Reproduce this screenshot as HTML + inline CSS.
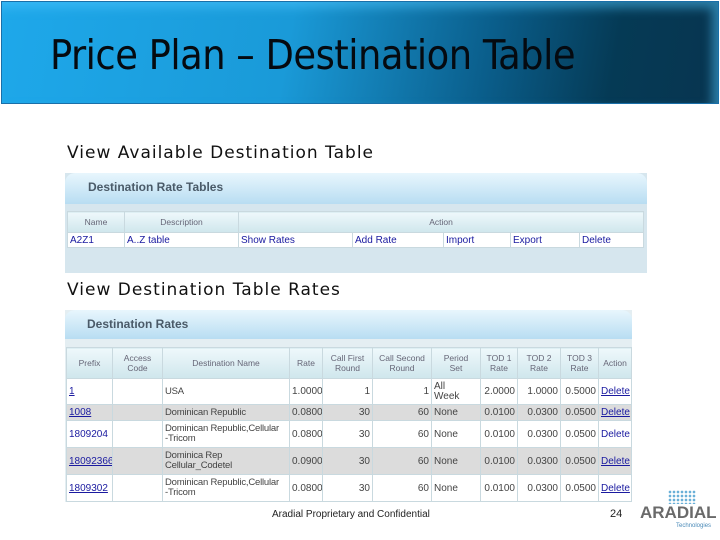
<!DOCTYPE html><html><head><style>
*{margin:0;padding:0;box-sizing:border-box}
body{width:720px;height:540px;background:#fff;position:relative;overflow:hidden;font-family:"Liberation Sans",sans-serif}
.a{position:absolute}
.hdr{left:1px;top:1px;width:718px;height:103px;border:1px solid #1a6fa8;background:linear-gradient(100deg,#1ea8ea 0%,#1a9ad8 40%,#0a5d8a 68%,#053a55 85%,#083550 100%);box-shadow:inset -6px 6px 10px rgba(80,200,255,.5)}
.hdr span{position:absolute;left:48px;top:29px;font-size:41px;color:#050a10;font-family:"DejaVu Sans Condensed","Liberation Sans Narrow",sans-serif;letter-spacing:-0.5px}
.cap{font-family:"DejaVu Sans",sans-serif;font-size:17px;color:#111;letter-spacing:1px}
.panel{background:#d6e6ee}
.bar{background:linear-gradient(#e8f6fd,#b8ddf2);border-radius:10px 10px 0 0;color:#4a5a68;font-weight:bold;font-size:12px}
table{border-collapse:collapse;position:absolute;font-size:10px;font-family:"Liberation Sans",sans-serif;table-layout:fixed}
td{border:1px solid #c9d9df;padding:0 2px;color:#444;white-space:nowrap;overflow:hidden}
th{border:1px solid #c9d9df;background:linear-gradient(#eef8fb,#cfe6ec);color:#667;font-weight:normal;font-size:8.5px;text-align:center;line-height:10px}
.l{color:#1a1aa0}
.u{color:#1a1aa0;text-decoration:underline}
.g td{background:#dcdcdc}
.w td{background:#fff}
.r{text-align:right}
.d{font-size:9.5px;letter-spacing:-0.2px}
</style></head><body>
<div class="a hdr"><span>Price Plan – Destination Table</span></div>
<div class="a cap" style="left:67px;top:143px">View Available Destination Table</div>
<div class="a panel" style="left:65px;top:173px;width:582px;height:100px"></div>
<div class="a bar" style="left:65px;top:173px;width:582px;height:31px;padding:7px 0 0 23px">Destination Rate Tables</div>
<table style="left:67px;top:211px;width:577px">
<colgroup><col style="width:57px"><col style="width:114px"><col style="width:114px"><col style="width:91px"><col style="width:67px"><col style="width:69px"><col></colgroup>
<tr style="height:21px"><th>Name</th><th>Description</th><th colspan="5">Action</th></tr>
<tr class="w" style="height:15px"><td class="l">A2Z1</td><td class="l">A..Z table</td><td class="l">Show Rates</td><td class="l">Add Rate</td><td class="l">Import</td><td class="l">Export</td><td class="l">Delete</td></tr>
</table>
<div class="a cap" style="left:67px;top:280px">View Destination Table Rates</div>
<div class="a panel" style="left:65px;top:310px;width:567px;height:192px;background:#e4eef2"></div>
<div class="a bar" style="left:65px;top:310px;width:567px;height:29px;padding:7px 0 0 22px">Destination Rates</div>
<table style="left:66px;top:347px;width:566px">
<colgroup><col style="width:46px"><col style="width:50px"><col style="width:127px"><col style="width:33px"><col style="width:50px"><col style="width:59px"><col style="width:49px"><col style="width:37px"><col style="width:43px"><col style="width:38px"><col></colgroup>
<tr style="height:31px"><th>Prefix</th><th>Access<br>Code</th><th>Destination Name</th><th>Rate</th><th>Call First<br>Round</th><th>Call Second<br>Round</th><th>Period<br>Set</th><th>TOD 1<br>Rate</th><th>TOD 2<br>Rate</th><th>TOD 3<br>Rate</th><th>Action</th></tr>
<tr class="w" style="height:26px"><td class="u">1</td><td></td><td class="d">USA</td><td>1.0000</td><td class="r">1</td><td class="r">1</td><td style="line-height:10px">All<br>Week</td><td class="r">2.0000</td><td class="r">1.0000</td><td class="r">0.5000</td><td class="u">Delete</td></tr>
<tr class="g" style="height:16px"><td class="u">1008</td><td></td><td class="d">Dominican Republic</td><td>0.0800</td><td class="r">30</td><td class="r">60</td><td>None</td><td class="r">0.0100</td><td class="r">0.0300</td><td class="r">0.0500</td><td class="u">Delete</td></tr>
<tr class="w" style="height:27px"><td class="l">1809204</td><td></td><td class="d" style="line-height:10px">Dominican Republic,Cellular<br>-Tricom</td><td>0.0800</td><td class="r">30</td><td class="r">60</td><td>None</td><td class="r">0.0100</td><td class="r">0.0300</td><td class="r">0.0500</td><td class="l">Delete</td></tr>
<tr class="g" style="height:27px"><td class="u">18092366</td><td></td><td class="d" style="line-height:10px">Dominica Rep<br>Cellular_Codetel</td><td>0.0900</td><td class="r">30</td><td class="r">60</td><td>None</td><td class="r">0.0100</td><td class="r">0.0300</td><td class="r">0.0500</td><td class="u">Delete</td></tr>
<tr class="w" style="height:27px"><td class="u">1809302</td><td></td><td class="d" style="line-height:10px">Dominican Republic,Cellular<br>-Tricom</td><td>0.0800</td><td class="r">30</td><td class="r">60</td><td>None</td><td class="r">0.0100</td><td class="r">0.0300</td><td class="r">0.0500</td><td class="u">Delete</td></tr>
</table>
<div class="a" style="left:272px;top:509px;font-size:10px;color:#222">Aradial Proprietary and Confidential</div>
<div class="a" style="left:610px;top:508px;font-size:11px;color:#222">24</div>
<div class="a" style="left:668px;top:490px;width:28px;height:14px;background:radial-gradient(circle,#6ab0d8 1.2px,transparent 1.5px) 0 0/4px 4px"></div>
<div class="a" style="left:640px;top:503px;font-size:17px;font-weight:bold;color:#6a6a6a">ARADIAL</div>
<div class="a" style="left:676px;top:523px;font-size:6px;color:#4a8ab8">Technologies</div>
</body></html>
